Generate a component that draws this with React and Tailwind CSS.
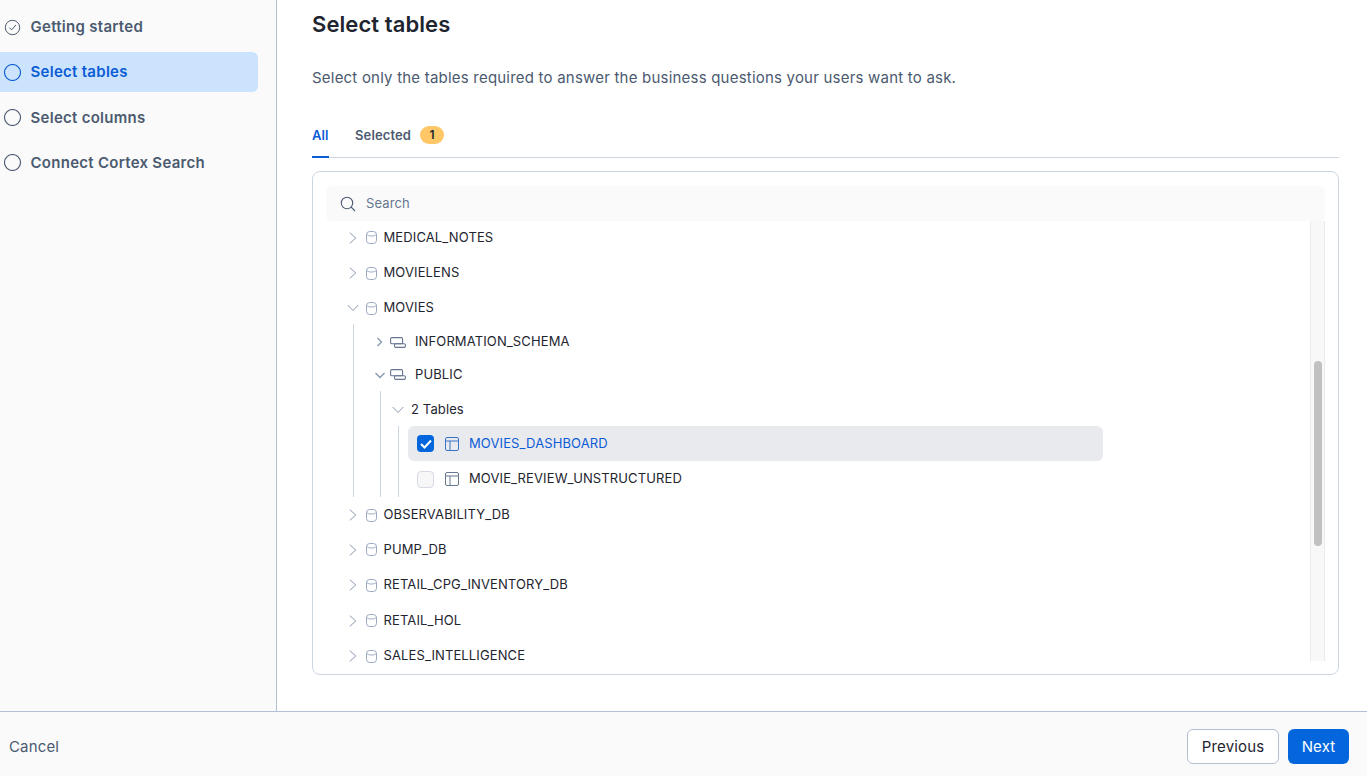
import React from "react";

const Chevron = ({ open, small, className = "" }) => {
  const d = small
    ? open
      ? "M1.500 4 L6 8.500 L10.500 4"
      : "M3.500 2 L7.500 6 L3.500 10"
    : open
      ? "M.7 3 L6 8.500 L11.300 3"
      : "M2.800 .7 L8.800 6 L2.800 11.300";
  return (
    <svg width="12" height="12" viewBox="0 0 12 12" fill="none" stroke="currentColor" strokeWidth={small ? 1.400 : 1} className={className}>
      <path d={d} />
    </svg>
  );
};

const Db = () => (
  <svg width="11" height="13" viewBox="0 0 11 13" fill="none" stroke="#9aa9bf" strokeWidth="1" className="shrink-0 ml-[1px]">
    <rect x=".5" y=".5" width="10" height="12" rx="3.200" />
    <path d="M.5 3.200C1.500 4.500 3.200 5 5.500 5s4-.5 5-1.800" />
  </svg>
);

const Schema = () => (
  <svg width="16" height="11" viewBox="0 0 16 11" fill="none" stroke="#67778f" strokeWidth="1.100" className="shrink-0">
    <rect x=".6" y=".6" width="12" height="6.200" rx="1.300" />
    <rect x="4.500" y="6.800" width="10.900" height="3.600" rx="1.200" />
  </svg>
);

const TableIcon = ({ color }) => (
  <svg width="14" height="14" viewBox="0 0 14 14" fill="none" stroke={color} strokeWidth="1" className="shrink-0 ml-[11px]">
    <rect x=".5" y=".5" width="13" height="13" rx="1.500" />
    <path d="M.5 4h13M5 4v9.500" />
  </svg>
);

const rowText = "text-[13px] font-normal tracking-[0.12px] text-[#1e252f]";

const DbRow = ({ name, h, open }) => (
  <div className={`flex items-center pl-[21px] ${h}`}>
    <Chevron open={open} className="text-[#8a99b0] shrink-0 mr-[6px]" />
    <Db />
    <span className={`ml-[6.500px] ${rowText}`}>{name}</span>
  </div>
);

const SchemaRow = ({ name, h, open }) => (
  <div className={`flex items-center pl-[20px] ${h}`}>
    <Chevron open={open} small className="text-[#8a99b0] shrink-0 mr-[4px]" />
    <Schema />
    <span className={`ml-[9px] ${rowText}`}>{name}</span>
  </div>
);

const Step = ({ label, active, done }) => (
  <div className={`flex items-center h-[40px] w-[258px] rounded-r-md pl-[4px] ${active ? "bg-[#cce3fd]" : ""}`}>
    {done ? (
      <svg width="17" height="17" viewBox="0 0 17 17" fill="none" stroke="#4b5a70" strokeWidth="1" className="shrink-0">
        <circle cx="8.500" cy="8.500" r="7.200" />
        <path d="M5.300 8.600 L7.600 10.900 L11.900 6" />
      </svg>
    ) : (
      <svg width="17" height="17" viewBox="0 0 17 17" fill="none" stroke={active ? "#0b5cd5" : "#4b5a70"} strokeWidth="1.100" className="shrink-0">
        <circle cx="8.500" cy="8.500" r="8" />
      </svg>
    )}
    <span className={`ml-[9.500px] text-[15px] tracking-[0.28px] font-semibold ${active ? "text-[#0b5cd5]" : "pt-[1px] text-[#4b5a70]"}`}>{label}</span>
  </div>
);

export default function App() {
  return (
    <div className="h-[776px] w-[1367px] overflow-hidden flex flex-col bg-white font-['Inter',sans-serif]">
      <div className="flex h-[711px]">
        <aside className="w-[277px] shrink-0 border-r border-[#b3c0d3] bg-[#fafafa] pt-[7px] flex flex-col gap-[5.330px]">
          <Step label="Getting started" done />
          <Step label="Select tables" active />
          <Step label="Select columns" />
          <Step label="Connect Cortex Search" />
        </aside>
        <main className="flex-1 pl-[35px] pr-[28px]">
          <h1 className="text-[22px] leading-[28px] font-semibold tracking-[0.08px] text-[#1e252f] mt-[10px]">Select tables</h1>
          <p className="text-[15px] leading-[20px] text-[#4b5a70] mt-[30px] tracking-[0.21px]">Select only the tables required to answer the business questions your users want to ask.</p>
          <div className="flex items-start mt-[30px] h-[40px] border-b border-[#cdd5e1]">
            <div className="h-[40px] border-b-2 border-[#0b5cd5] w-[17px] pt-[9px] text-[13px] leading-[16px] font-semibold tracking-[0.1px] text-[#0b5cd5]">All</div>
            <div className="ml-[26px] pt-[9px] text-[13px] leading-[16px] font-semibold tracking-[0.12px] text-[#4b5a70]">Selected</div>
            <div className="ml-[9px] mt-[8px] w-[24px] h-[18px] rounded-full bg-[#ffc766] flex items-center justify-center text-[12px] font-semibold text-[#1e252f]">1</div>
          </div>
          <div className="mt-[13px] h-[504px] rounded-lg border border-[#cdd5e1] px-[13px] pt-[14px] overflow-hidden">
            <div className="h-[35px] rounded-md bg-[#fafafa] flex items-center pl-[14px]">
              <svg width="16" height="16" viewBox="0 0 16 16" fill="none" stroke="#4b5a70" strokeWidth="1.100" className="shrink-0">
                <circle cx="7" cy="7" r="5.700" />
                <path d="M11.200 11.200 L15 15" />
              </svg>
              <span className="ml-[10px] text-[13px] tracking-[0.1px] text-[#67778f]">Search</span>
            </div>
            <div className="flex h-[440px]">
              <div className="flex-1">
                <DbRow name="MEDICAL_NOTES" h="h-[33px]" />
                <DbRow name="MOVIELENS" h="h-[36px] pt-[2px]" />
                <DbRow name="MOVIES" h="h-[34px] pt-[2px]" open />
                <div className="ml-[27px] border-l border-[#cdd5e1]">
                  <SchemaRow name="INFORMATION_SCHEMA" h="h-[34px] pt-[2px]" />
                  <SchemaRow name="PUBLIC" h="h-[33px]" open />
                  <div className="ml-[26px] border-l border-[#cdd5e1]">
                    <div className="flex items-center h-[35px] pt-[2px] pl-[11px]">
                      <Chevron open className="text-[#8a99b0] shrink-0" />
                      <span className={`ml-[7px] ${rowText}`}>2 Tables</span>
                    </div>
                    <div className="ml-[17px] border-l border-[#cdd5e1] pl-[9px]">
                      <div className="flex items-center h-[35px] w-[695px] rounded-md bg-[#e9eaee] pl-[9px]">
                        <span className="w-[17px] h-[17px] rounded-[4px] bg-[#0466dc] flex items-center justify-center shrink-0">
                          <svg width="12" height="10" viewBox="0 0 12 10" fill="none" stroke="#fff" strokeWidth="2">
                            <path d="M1 5 L4.500 8.500 L11 1.500" />
                          </svg>
                        </span>
                        <TableIcon color="#3b74c7" />
                        <span className="ml-[10px] text-[13px] font-normal tracking-[0.12px] text-[#0b5cd5]">MOVIES_DASHBOARD</span>
                      </div>
                      <div className="flex items-center h-[36px] pl-[9px]">
                        <span className="w-[17px] h-[17px] rounded-[4px] bg-[#f7f7f7] border border-[#d5dae3] shrink-0" />
                        <TableIcon color="#67778f" />
                        <span className={`ml-[10px] ${rowText}`}>MOVIE_REVIEW_UNSTRUCTURED</span>
                      </div>
                    </div>
                  </div>
                </div>
                <DbRow name="OBSERVABILITY_DB" h="h-[34px] pt-[2px]" />
                <DbRow name="PUMP_DB" h="h-[35px] pt-[2px]" />
                <DbRow name="RETAIL_CPG_INVENTORY_DB" h="h-[36px] pt-[2px]" />
                <DbRow name="RETAIL_HOL" h="h-[35px] pt-[2px]" />
                <DbRow name="SALES_INTELLIGENCE" h="h-[36px] pt-[2px]" />
              </div>
              <div className="w-[15px] shrink-0 bg-[#f8f8f8] border-x border-[#ebebeb] pt-[140px] pl-[3px]">
                <div className="w-[8px] h-[185px] rounded-full bg-[#c1c1c1]" />
              </div>
            </div>
          </div>
        </main>
      </div>
      <footer className="h-[65px] border-t border-[#b3c0d3] bg-[#fafafa] flex items-center pt-[4px] pl-[9px] pr-[18px]">
        <span className="pt-[2px] text-[15px] tracking-[0.15px] text-[#4b5a70]">Cancel</span>
        <div className="ml-auto flex items-center gap-[9px]">
          <button className="h-[35px] w-[92px] rounded-md border border-[#b3c0d3] bg-white pt-[2px] text-[15px] font-normal tracking-[0.15px] text-[#1e252f]">Previous</button>
          <button className="h-[35px] w-[61px] rounded-md bg-[#0466dc] pt-[2px] text-[15px] font-normal tracking-[0.15px] text-white">Next</button>
        </div>
      </footer>
    </div>
  );
}
